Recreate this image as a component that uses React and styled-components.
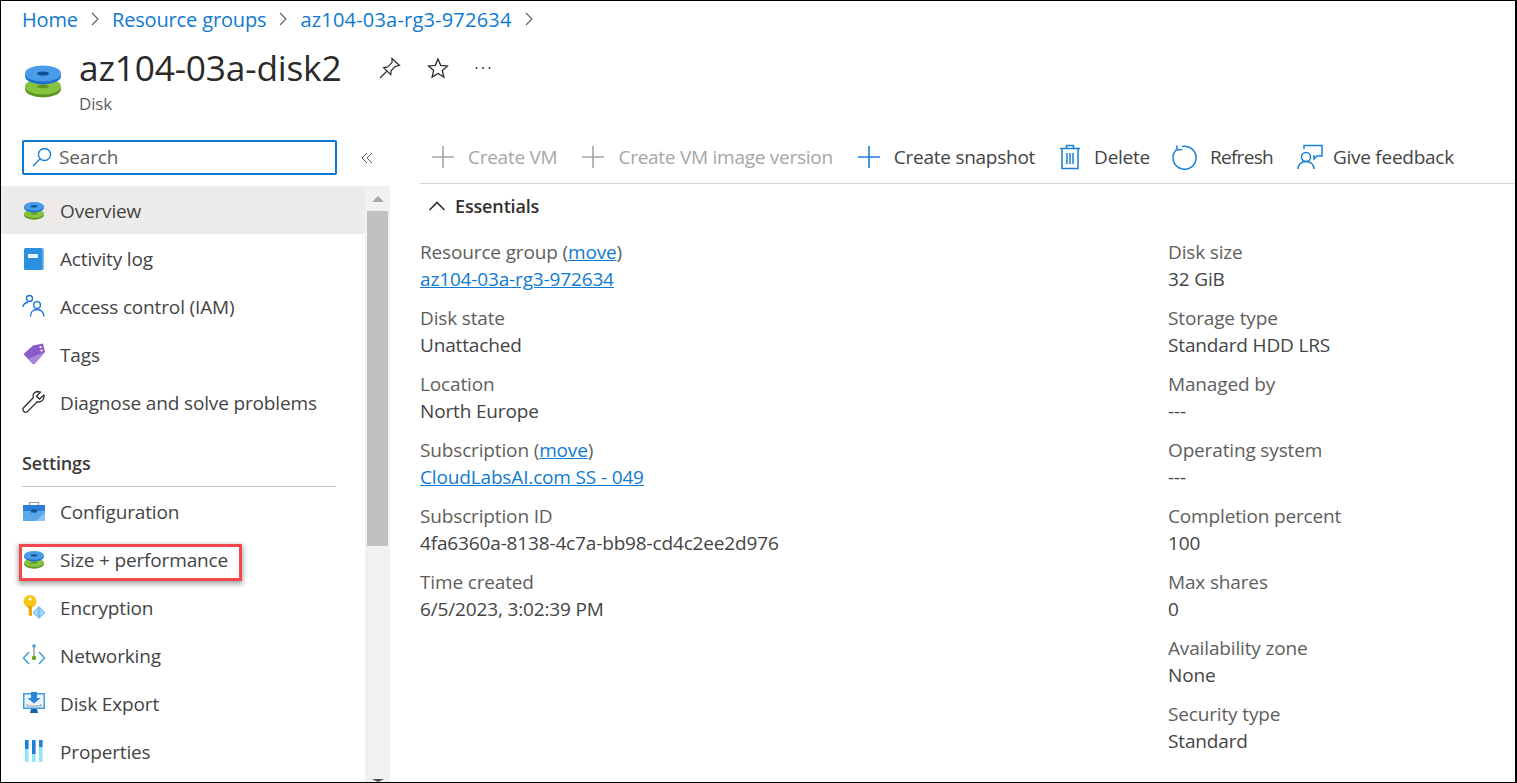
import React from 'react'
import styled, { createGlobalStyle } from 'styled-components'

const GlobalStyle = createGlobalStyle`
	html, body {
		margin: 0;
		padding: 0;
		background: #fff;
	}
	body {
		font-family: "Open Sans", "Noto Sans", "Liberation Sans", sans-serif;
		font-size: 19px;
		letter-spacing: -0.15px;
		color: #323130;
	}
	* {
		box-sizing: border-box;
	}
`

function DiskIcon({ size = 20 }) {
	return (
		<svg width={size} height={size} viewBox="0 0 36 36">
			<ellipse cx="18" cy="27" rx="18" ry="8.500" fill="#5e9624" />
			<ellipse cx="18" cy="24.500" rx="18" ry="8" fill="#86c440" />
			<ellipse cx="18" cy="24.500" rx="6" ry="1.800" fill="#5e9624" />
			<ellipse cx="18" cy="14" rx="18" ry="8.500" fill="#1e6fd0" />
			<ellipse cx="18" cy="11.500" rx="18" ry="8" fill="#4a9ce8" />
			<ellipse cx="18" cy="11.500" rx="6" ry="2" fill="#0f4f96" />
		</svg>
	)
}

const BookIcon = () => (
	<svg width="24" height="24" viewBox="0 0 24 24">
		<rect x="3" y="2" width="19" height="22" rx="1.500" fill="#86bfee" />
		<rect x="2" y="2" width="18.500" height="22" rx="1.500" fill="#2a90e0" />
		<rect x="6" y="8" width="10" height="4" fill="#e8f3fc" />
	</svg>
)

const PeopleIcon = () => (
	<svg width="24" height="24" viewBox="0 0 24 24" fill="none" stroke="#1a73d9" strokeWidth="1.400">
		<circle cx="7.500" cy="4.500" r="3" />
		<path d="M1 13c.5-3 2.500-4.500 5-4.500" />
		<circle cx="15" cy="11" r="3.400" />
		<path d="M8.500 22.500c0-4 2.500-7 6.500-7s6.500 3 7 7" />
	</svg>
)

const TagIcon = () => (
	<svg width="24" height="24" viewBox="0 0 24 24">
		<path d="M1.500 12 11 3.500 21 1.500 23 10 13 21.500c-.8.8-1.700.8-2.500.2z" fill="#8a5cc8" />
		<path d="M7 16.500 23 10 13 21.500c-.8.8-1.700.8-2.500.2z" fill="#a888dc" />
		<circle cx="18.500" cy="5" r="1.100" fill="#fff" />
		<circle cx="19.500" cy="8.500" r="1.100" fill="#fff" />
	</svg>
)

const WrenchIcon = () => (
	<svg width="24" height="24" viewBox="0 0 24 24" fill="none" stroke="#2b2b2b" strokeWidth="1.300">
		<path d="M15.500 1.500c-3 .2-5.200 3-4.300 6.300L1.800 17.500c-1.200 1.300-1.200 3 0 4 1.100 1.100 2.800 1 3.900-.1l9.500-9.600c3.600 1 6.900-1.800 6.900-5.300l-.3-1.200-4.300 3.800-3-2.800 3.900-4.200z" />
	</svg>
)

const ToolboxIcon = () => (
	<svg width="24" height="24" viewBox="0 0 24 24">
		<path d="M7.500 7V3.500h9V7" fill="none" stroke="#9a9a9a" strokeWidth="1.200" />
		<rect x="1" y="6" width="22" height="16" fill="#5aa7ea" />
		<rect x="1" y="6" width="22" height="6" fill="#2a7fd4" />
		<path d="M14 22 23 14v8z" fill="#8cc4f2" />
		<rect x="9" y="10.500" width="6" height="3" fill="#0f4f96" />
	</svg>
)

const KeyIcon = () => (
	<svg width="24" height="26" viewBox="0 0 24 26">
		<circle cx="8" cy="7.500" r="6.500" fill="#f5c518" />
		<circle cx="8" cy="5" r="1.500" fill="#fff" />
		<path d="M6 12h4v10H8l-2-2 1.200-1.500L6 17l1.200-1.500L6 14z" fill="#e8a80c" />
		<path d="m17 12 6.500 6.500L17 25l-6.500-6.500z" fill="#7cc4ee" />
		<path d="m15.500 16.500-2 2 2 2M18.500 16.500l2 2-2 2" fill="none" stroke="#fff" strokeWidth="1" />
	</svg>
)

const NetworkIcon = () => (
	<svg width="24" height="24" viewBox="0 0 24 24" fill="none">
		<path d="M7 9 1.500 15 7 21M17 9l5.500 6-5.500 6" stroke="#3f9fdc" strokeWidth="1.500" />
		<path d="M12 3v11" stroke="#777" strokeWidth="1.100" />
		<circle cx="12" cy="3" r="1.800" fill="#3f9fdc" />
		<circle cx="12" cy="15" r="2.200" fill="#6aa52c" />
	</svg>
)

const MonitorIcon = () => (
	<svg width="24" height="24" viewBox="0 0 24 24">
		<rect x="1" y="2" width="22" height="16" fill="#3aa0e8" />
		<rect x="2.500" y="3.500" width="19" height="13" fill="#eaf4fc" />
		<path d="M9 1h6v6h3.500L12 12.500 5.500 7H9z" fill="#2a86dc" />
		<path d="M5 13v2h14v-2" fill="none" stroke="#9a9a9a" strokeWidth="1" />
		<path d="M9 18h6l1 4H8z" fill="#1a5fa8" />
	</svg>
)

const BarsIcon = () => (
	<svg width="24" height="24" viewBox="0 0 24 24">
		<rect x="3" y="1" width="3.500" height="22" fill="#8fe4f5" />
		<rect x="10" y="1" width="3.500" height="22" fill="#8fe4f5" />
		<rect x="17" y="1" width="3.500" height="22" fill="#8fe4f5" />
		<rect x="3" y="1" width="3.500" height="9" fill="#1f7fd8" />
		<rect x="10" y="1" width="3.500" height="14" fill="#1f7fd8" />
		<rect x="17" y="1" width="3.500" height="7" fill="#1f7fd8" />
	</svg>
)

const PlusIcon = ({ color }) => (
	<svg width="24" height="24" viewBox="0 0 24 24" fill="none" stroke={color} strokeWidth="1.600">
		<path d="M12 1v22M1 12h22" />
	</svg>
)

const TrashIcon = () => (
	<svg width="22" height="26" viewBox="0 0 22 26" fill="none" stroke="#1a7fd6" strokeWidth="1.500">
		<path d="M1 4.500h20M7.500 4.500V1.500h7v3M3 4.500V24.500h16V4.500M8 9v11M11 9v11M14 9v11" />
	</svg>
)

const RefreshSvg = styled.svg`
	margin: 0 -1px 0 -2px;
`

const RefreshIcon = () => (
	<RefreshSvg width="26" height="26" viewBox="0 0 26 26" fill="none" stroke="#1a7fd6" strokeWidth="1.500">
		<path d="M10 2.500a11.500 11.500 0 1 1-5.500 3M4.500 1.500l1 4.500 4.500-.5" />
	</RefreshSvg>
)

const FeedbackSvg = styled.svg`
	margin-right: -3px;
`

const FeedbackIcon = () => (
	<FeedbackSvg width="26" height="26" viewBox="0 0 26 26" fill="none" stroke="#1a7fd6" strokeWidth="1.500">
		<path d="M7 5V1.500h18V12h-5l-3 3v-3h-1" />
		<circle cx="9" cy="13" r="4.500" />
		<path d="M1 25c0-4.500 3.500-7.500 8-7.500s8 3 8 7.500" />
	</FeedbackSvg>
)

const PinIcon = () => (
	<svg width="22" height="22" viewBox="0 0 22 22" fill="none" stroke="#2b2b2b" strokeWidth="1.200">
		<path d="M13 1.500 20.500 8.500l-4 .8-4.300 4.300-.5 4-7-7 4-.7 4.300-4.300zM7.500 14.500 1 21" />
	</svg>
)

const StarIcon = () => (
	<svg width="22" height="22" viewBox="0 0 22 22" fill="none" stroke="#2b2b2b" strokeWidth="1.300">
		<path d="m11 2 2.700 6.300 6.800.6-5.200 4.500 1.600 6.700L11 16.500 5.100 20.100l1.600-6.700L1.500 8.900l6.800-.6z" />
	</svg>
)

const MoreIcon = () => (
	<svg width="16" height="4" viewBox="0 0 16 4" fill="#3b3a39">
		<circle cx="1.500" cy="2" r="1" />
		<circle cx="8" cy="2" r="1" />
		<circle cx="14.500" cy="2" r="1" />
	</svg>
)

const Chevron = () => (
	<svg width="10" height="14" viewBox="0 0 10 14" fill="none" stroke="#605e5c" strokeWidth="1.100">
		<path d="m2 1 6 6-6 6" />
	</svg>
)

const Frame = styled.div`
	height: 783px;
	border: 1px solid #000;
	border-right-width: 2px;
	overflow: hidden;
	display: flex;
	flex-direction: column;
`

const Breadcrumb = styled.nav`
	height: 36px;
	flex: none;
	padding-left: 21px;
	display: flex;
	align-items: center;
	gap: 12px;
	font-size: 20px;
`

const Crumb = styled.a`
	color: #0f7ad1;
	letter-spacing: ${({ $wide }) => ($wide ? '0.2px' : '-0.15px')};
`

const Header = styled.header`
	height: 103px;
	flex: none;
	padding: 5px 0 0 24px;
	display: flex;
	align-items: flex-start;
`

const HeaderIcon = styled.div`
	margin-top: 20px;
	width: 36px;
	height: 36px;
`

const HeaderText = styled.div`
	margin-left: 18px;
`

const Title = styled.h1`
	margin: 0;
	font-size: 35.300px;
	line-height: 51px;
	font-weight: 400;
	letter-spacing: -0.2px;
	color: #2b2a29;
`

const Subtitle = styled.div`
	font-size: 17px;
	line-height: 22px;
	color: #605e5c;
`

const HeaderActions = styled.div`
	margin: 14px 0 0 38px;
	display: flex;
	align-items: center;
	gap: 26px;
	height: 24px;
`

const Body = styled.div`
	flex: 1;
	min-height: 0;
	display: flex;
`

const Sidebar = styled.aside`
	width: 389px;
	flex: none;
	display: flex;
	flex-direction: column;
`

const SearchRow = styled.div`
	height: 46px;
	flex: none;
	padding-left: 21px;
	display: flex;
	align-items: flex-start;
`

const SearchBox = styled.div`
	width: 315px;
	height: 35px;
	flex: none;
	border: 2px solid #0f7ad1;
	border-radius: 2px;
	padding: 0 0 1px 8px;
	display: flex;
	align-items: center;
	gap: 7px;
	color: #605e5c;
`

const Collapse = styled.div`
	margin-left: 24px;
	height: 36px;
	display: flex;
	align-items: center;
`

const NavArea = styled.div`
	flex: 1;
	min-height: 0;
	display: flex;
`

const NavList = styled.div`
	width: 364px;
	flex: none;
`

const NavRow = styled.div`
	position: relative;
	height: 48px;
	padding: 2px 0 0 21px;
	display: flex;
	align-items: center;
	gap: 14px;
	color: #444;
	background: ${({ $active }) => ($active ? '#edebe9' : 'transparent')};
`

const NavIcon = styled.div`
	width: 24px;
	height: 26px;
	margin-top: -2px;
	display: flex;
	align-items: center;
	justify-content: center;
`

const NavHeading = styled.div`
	height: 61px;
	margin: 0 29px 0 21px;
	padding: 25px 0 11px;
	line-height: 24px;
	font-weight: 600;
	font-size: 18px;
	color: #3b3a39;
	border-bottom: 1px solid #c8c6c4;
`

const Highlight = styled.div`
	position: absolute;
	left: 18px;
	top: 9px;
	width: 223px;
	height: 37px;
	border: 3px solid #f2474c;
	box-shadow: 0 2px 5px 1px rgba(0, 0, 0, 0.35);
	pointer-events: none;
`

const Track = styled.div`
	width: 25px;
	flex: none;
	background: #f1f1f1;
	display: flex;
	flex-direction: column;
	align-items: center;
`

const ArrowUp = styled.div`
	width: 0;
	height: 0;
	margin: 10px 0 9px;
	border-left: 6px solid transparent;
	border-right: 6px solid transparent;
	border-bottom: 6px solid #a9a9a9;
`

const Thumb = styled.div`
	width: 21px;
	height: 335px;
	background: #c1c1c1;
`

const ArrowDown = styled.div`
	width: 0;
	height: 0;
	margin-top: auto;
	border-left: 6px solid transparent;
	border-right: 6px solid transparent;
	border-top: 3px solid #505050;
`

const Main = styled.main`
	flex: 1;
	min-width: 0;
	padding-left: 30px;
`

const Toolbar = styled.div`
	height: 44px;
	padding-left: 11px;
	border-bottom: 1px solid #d6d6d6;
	display: flex;
	align-items: flex-start;
	gap: 24px;
	letter-spacing: -0.26px;
`

const ToolButton = styled.div`
	height: 34px;
	display: flex;
	align-items: center;
	gap: 13px;
	color: ${({ $disabled }) => ($disabled ? '#a6a6a6' : '#444')};
	letter-spacing: ${({ $tight }) => ($tight ? '-0.7px' : 'inherit')};
`

const EssentialsHead = styled.div`
	height: 44px;
	padding-left: 8px;
	display: flex;
	align-items: center;
	gap: 9px;
	font-weight: 600;
	font-size: 18px;
	color: #323130;
`

const Columns = styled.div`
	margin-top: 11px;
	display: grid;
	grid-template-columns: 748px 1fr;
`

const Column = styled.div`
	display: flex;
	flex-direction: column;
	gap: 12px;
`

const Field = styled.div`
	line-height: 27px;
`

const Label = styled.div`
	color: #605e5c;
`

const Value = styled.div`
	color: #444;
`

const BlueLink = styled.a`
	color: #0f7ad1;
	text-decoration: underline;
`

const TagsRow = styled.div`
	margin-top: 21px;
	line-height: 27px;
	color: #605e5c;
`

const navTop = [
	{ label: 'Overview', icon: <DiskIcon />, active: true },
	{ label: 'Activity log', icon: <BookIcon /> },
	{ label: 'Access control (IAM)', icon: <PeopleIcon /> },
	{ label: 'Tags', icon: <TagIcon /> },
	{ label: 'Diagnose and solve problems', icon: <WrenchIcon /> },
]

const navSettings = [
	{ label: 'Configuration', icon: <ToolboxIcon /> },
	{ label: 'Size + performance', icon: <DiskIcon />, marked: true },
	{ label: 'Encryption', icon: <KeyIcon /> },
	{ label: 'Networking', icon: <NetworkIcon /> },
	{ label: 'Disk Export', icon: <MonitorIcon /> },
	{ label: 'Properties', icon: <BarsIcon /> },
]

const tools = [
	{ label: 'Create VM', icon: <PlusIcon color="#a6a6a6" />, disabled: true },
	{ label: 'Create VM image version', icon: <PlusIcon color="#a6a6a6" />, disabled: true },
	{ label: 'Create snapshot', icon: <PlusIcon color="#1a7fd6" /> },
	{ label: 'Delete', icon: <TrashIcon /> },
	{ label: 'Refresh', icon: <RefreshIcon />, tight: true },
	{ label: 'Give feedback', icon: <FeedbackIcon /> },
]

const leftFields = [
	{ label: 'Resource group', move: true, link: 'az104-03a-rg3-972634' },
	{ label: 'Disk state', value: 'Unattached' },
	{ label: 'Location', value: 'North Europe' },
	{ label: 'Subscription', move: true, link: 'CloudLabsAI.com SS - 049' },
	{ label: 'Subscription ID', value: '4fa6360a-8138-4c7a-bb98-cd4c2ee2d976' },
	{ label: 'Time created', value: '6/5/2023, 3:02:39 PM' },
]

const rightFields = [
	{ label: 'Disk size', value: '32 GiB' },
	{ label: 'Storage type', value: 'Standard HDD LRS' },
	{ label: 'Managed by', value: '---' },
	{ label: 'Operating system', value: '---' },
	{ label: 'Completion percent', value: '100' },
	{ label: 'Max shares', value: '0' },
	{ label: 'Availability zone', value: 'None' },
	{ label: 'Security type', value: 'Standard' },
]

function NavItem({ item }) {
	return (
		<NavRow $active={item.active}>
			<NavIcon>{item.icon}</NavIcon>
			{item.label}
			{item.marked && <Highlight />}
		</NavRow>
	)
}

function FieldBlock({ field }) {
	return (
		<Field>
			<Label>
				{field.label}
				{field.move && (
					<>
						{' ('}
						<BlueLink>move</BlueLink>
						{')'}
					</>
				)}
			</Label>
			<Value>{field.link ? <BlueLink>{field.link}</BlueLink> : field.value}</Value>
		</Field>
	)
}

export default function App() {
	return (
		<Frame>
			<GlobalStyle />
			<Breadcrumb>
				<Crumb>Home</Crumb>
				<Chevron />
				<Crumb>Resource groups</Crumb>
				<Chevron />
				<Crumb $wide>az104-03a-rg3-972634</Crumb>
				<Chevron />
			</Breadcrumb>

			<Header>
				<HeaderIcon>
					<DiskIcon size={36} />
				</HeaderIcon>
				<HeaderText>
					<Title>az104-03a-disk2</Title>
					<Subtitle>Disk</Subtitle>
				</HeaderText>
				<HeaderActions>
					<PinIcon />
					<StarIcon />
					<MoreIcon />
				</HeaderActions>
			</Header>

			<Body>
				<Sidebar>
					<SearchRow>
						<SearchBox>
							<svg width="20" height="20" viewBox="0 0 20 20" fill="none" stroke="#0f7ad1" strokeWidth="1.300">
								<circle cx="12.500" cy="7.500" r="6" />
								<path d="M8 12 1 19" />
							</svg>
							Search
						</SearchBox>
						<Collapse>
							<svg width="12" height="12" viewBox="0 0 12 12" fill="none" stroke="#605e5c" strokeWidth="1">
								<path d="M6 1 1 6l5 5M11 1 6 6l5 5" />
							</svg>
						</Collapse>
					</SearchRow>
					<NavArea>
						<NavList>
							{navTop.map((item) => (
								<NavItem key={item.label} item={item} />
							))}
							<NavHeading>Settings</NavHeading>
							{navSettings.map((item) => (
								<NavItem key={item.label} item={item} />
							))}
						</NavList>
						<Track>
							<ArrowUp />
							<Thumb />
							<ArrowDown />
						</Track>
					</NavArea>
				</Sidebar>

				<Main>
					<Toolbar>
						{tools.map((tool) => (
							<ToolButton key={tool.label} $disabled={tool.disabled} $tight={tool.tight}>
								{tool.icon}
								{tool.label}
							</ToolButton>
						))}
					</Toolbar>
					<EssentialsHead>
						<svg width="18" height="12" viewBox="0 0 18 12" fill="none" stroke="#323130" strokeWidth="1.600">
							<path d="m1.500 10 7.500-7.500 7.500 7.500" />
						</svg>
						Essentials
					</EssentialsHead>
					<Columns>
						<Column>
							{leftFields.map((field) => (
								<FieldBlock key={field.label} field={field} />
							))}
						</Column>
						<Column>
							{rightFields.map((field) => (
								<FieldBlock key={field.label} field={field} />
							))}
						</Column>
					</Columns>
					<TagsRow>
						Tags (<BlueLink>edit</BlueLink>)
					</TagsRow>
				</Main>
			</Body>
		</Frame>
	)
}
